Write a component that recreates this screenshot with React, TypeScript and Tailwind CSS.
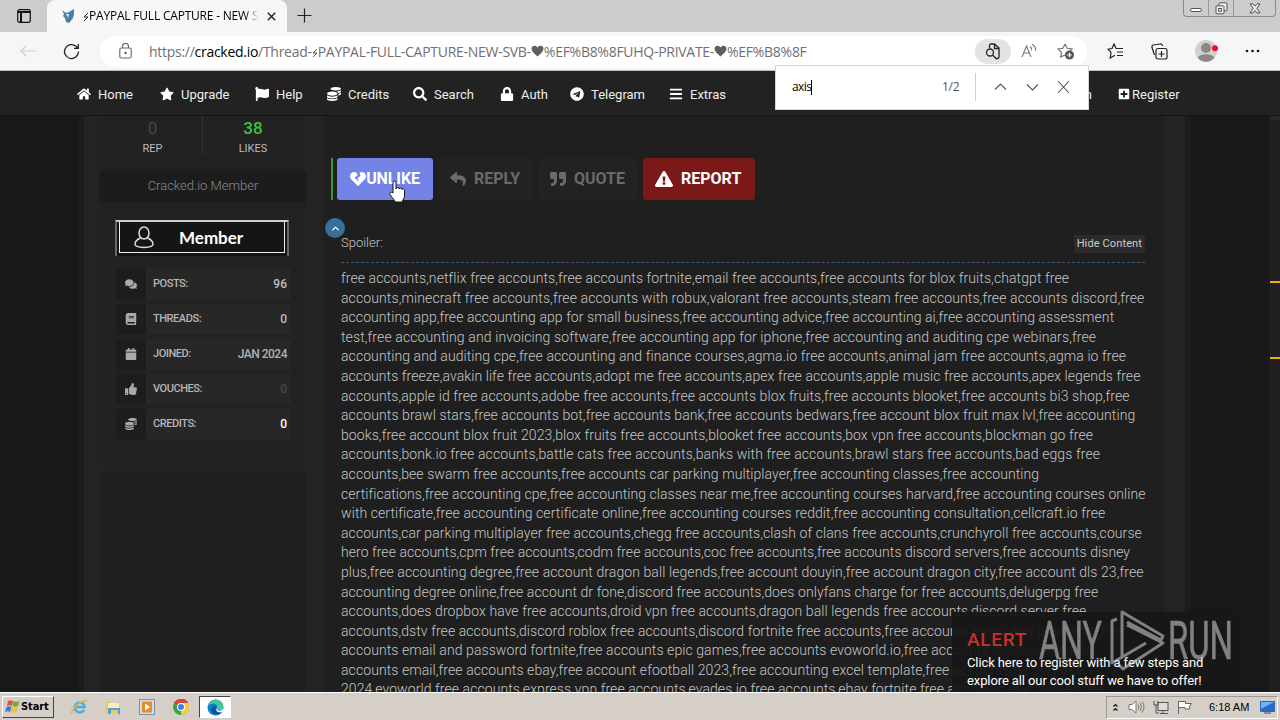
import React from 'react';
import { FaHome, FaStar, FaFlag, FaCoins, FaSearch, FaLock, FaTelegram, FaBars, FaPlusSquare, FaComments, FaBook, FaCalendar, FaThumbsUp, FaReply, FaQuoteRight, FaExclamationTriangle, FaHeartBroken } from 'react-icons/fa';
import { ChevronUp } from 'lucide-react';

const navItems = [
  { label: 'Home', Icon: FaHome, width: 'w-[83px]', text: 'w-[34px]' },
  { label: 'Upgrade', Icon: FaStar, width: 'w-[95px]', text: 'w-[48px]' },
  { label: 'Help', Icon: FaFlag, width: 'w-[72px]', text: 'w-[27px]' },
  { label: 'Credits', Icon: FaCoins, width: 'w-[86px]', text: 'w-[40px]' },
  { label: 'Search', Icon: FaSearch, width: 'w-[87px]', text: 'w-[40px]' },
  { label: 'Auth', Icon: FaLock, width: 'w-[70px]', text: 'w-[27px]' },
  { label: 'Telegram', Icon: FaTelegram, width: 'w-[99px]', text: 'w-[54px]' },
  { label: 'Extras', Icon: FaBars, width: 'w-[90px]', text: 'w-[35px]' },
];

const stats = [
  { label: 'POSTS:', value: '96', Icon: FaComments, color: 'text-[#bdbdbd]' },
  { label: 'THREADS:', value: '0', Icon: FaBook, color: 'text-[#bdbdbd]' },
  { label: 'JOINED:', value: 'JAN 2024', Icon: FaCalendar, color: 'text-[#b0b0b0] tracking-[-0.5px]' },
  { label: 'VOUCHES:', value: '0', Icon: FaThumbsUp, color: 'text-[#4a4a4a]' },
  { label: 'CREDITS:', value: '0', Icon: FaCoins, color: 'text-white' },
];

const lines = [
  { tracking: 'tracking-[0.09px]', text: 'free accounts,netflix free accounts,free accounts fortnite,email free accounts,free accounts for blox fruits,chatgpt free' },
  { tracking: 'tracking-[0.11px]', text: 'accounts,minecraft free accounts,free accounts with robux,valorant free accounts,steam free accounts,free accounts discord,free' },
  { tracking: 'tracking-[0.07px]', text: 'accounting app,free accounting app for small business,free accounting advice,free accounting ai,free accounting assessment' },
  { tracking: 'tracking-[0.115px]', text: 'test,free accounting and invoicing software,free accounting app for iphone,free accounting and auditing cpe webinars,free' },
  { tracking: 'tracking-[0.08px]', text: 'accounting and auditing cpe,free accounting and finance courses,agma.io free accounts,animal jam free accounts,agma io free' },
  { tracking: 'tracking-[0.065px]', text: 'accounts freeze,avakin life free accounts,adopt me free accounts,apex free accounts,apple music free accounts,apex legends free' },
  { tracking: 'tracking-[0.09px]', text: 'accounts,apple id free accounts,adobe free accounts,free accounts blox fruits,free accounts blooket,free accounts bi3 shop,free' },
  { tracking: 'tracking-[0.1px]', text: 'accounts brawl stars,free accounts bot,free accounts bank,free accounts bedwars,free account blox fruit max lvl,free accounting' },
  { tracking: 'tracking-[0.09px]', text: 'books,free account blox fruit 2023,blox fruits free accounts,blooket free accounts,box vpn free accounts,blockman go free' },
  { tracking: 'tracking-[0.11px]', text: 'accounts,bonk.io free accounts,battle cats free accounts,banks with free accounts,brawl stars free accounts,bad eggs free' },
  { tracking: 'tracking-[0.08px]', text: 'accounts,bee swarm free accounts,free accounts car parking multiplayer,free accounting classes,free accounting' },
  { tracking: 'tracking-[0.065px]', text: 'certifications,free accounting cpe,free accounting classes near me,free accounting courses harvard,free accounting courses online' },
  { tracking: 'tracking-[0.085px]', text: 'with certificate,free accounting certificate online,free accounting courses reddit,free accounting consultation,cellcraft.io free' },
  { tracking: 'tracking-[0.08px]', text: 'accounts,car parking multiplayer free accounts,chegg free accounts,clash of clans free accounts,crunchyroll free accounts,course' },
  { tracking: 'tracking-[0.05px]', text: 'hero free accounts,cpm free accounts,codm free accounts,coc free accounts,free accounts discord servers,free accounts disney' },
  { tracking: 'tracking-[0.085px]', text: 'plus,free accounting degree,free account dragon ball legends,free account douyin,free account dragon city,free account dls 23,free' },
  { tracking: 'tracking-[0.075px]', text: 'accounting degree online,free account dr fone,discord free accounts,does onlyfans charge for free accounts,delugerpg free' },
  { tracking: 'tracking-[0.085px]', text: 'accounts,does dropbox have free accounts,droid vpn free accounts,dragon ball legends free accounts,discord server free' },
  { tracking: 'tracking-[0.085px]', text: 'accounts,dstv free accounts,discord roblox free accounts,discord fortnite free accounts,free accounts email and password,free' },
  { tracking: 'tracking-[0.085px]', text: 'accounts email and password fortnite,free accounts epic games,free accounts evoworld.io,free accounts express vpn,free' },
  { tracking: 'tracking-[0.085px]', text: 'accounts email,free accounts ebay,free account efootball 2023,free accounting excel template,free accounts ea play,free' },
  { tracking: 'tracking-[0.085px]', text: '2024,evoworld free accounts,express vpn free accounts,evades.io free accounts,ebay fortnite free accounts,epic games free' },
];

const BrowserTabs = () => (
  <div className="flex h-8 items-end bg-[#cccccc] relative">
    <div className="flex h-8 w-[47px] items-center justify-center">
      <svg width="14" height="14" viewBox="0 0 14 14" fill="none" stroke="#111" strokeWidth="1.2">
        <rect x="0.7" y="0.7" width="12.6" height="12.6" rx="2" />
        <path d="M1 3h12M4 3v10" strokeWidth="2" />
      </svg>
    </div>
    <div className="flex h-8 w-[240px] items-center rounded-t-lg bg-[#f7f7f7] pl-[15px]">
      <svg width="13" height="14" viewBox="0 0 13 14">
        <path d="M0 1l4 3 3-1 5-3v5l-1 4-4 5-3-1-1-4-2-2 1-2z" fill="#4a7fa5" />
        <path d="M4 5l3 0-1 4z" fill="#dce9f2" />
      </svg>
      <span className="ml-[8px] w-[176px] shrink-0 overflow-hidden whitespace-nowrap bg-gradient-to-r from-black from-92% to-transparent bg-clip-text text-[12px] tracking-[-0.2px] text-transparent">
        <svg className="inline" width="6" height="10" viewBox="0 0 6 10"><path d="M5 1L1 5h4L1 9" fill="none" stroke="#222" /></svg>PAYPAL FULL CAPTURE - NEW S
      </span>
      <svg className="ml-[8px]" width="9" height="9" viewBox="0 0 9 9" stroke="#222" strokeWidth="1.4"><path d="M.8.8l7.4 7.4M8.2.8L.8 8.2" /></svg>
    </div>
    <svg className="mb-[9px] ml-[10px]" width="15" height="15" viewBox="0 0 15 15" stroke="#222" strokeWidth="1.2"><path d="M7.5 0.5v14M.5 7.5h14" /></svg>
    {/* window buttons */}
    <div className="absolute right-1 top-0 flex h-[17px] w-[93px] rounded-b border border-t-0 border-[#8b8b8b]">
      <div className="flex w-[25px] items-center justify-center border-r border-[#999]">
        <div className="mt-1 h-[4px] w-[12px] rounded-sm border border-[#555] bg-white" />
      </div>
      <div className="flex w-[25px] items-center justify-center border-r border-[#999]">
        <svg width="13" height="13" viewBox="0 0 13 13" fill="#eee" stroke="#555"><rect x="4" y=".8" width="8" height="8" rx="1" /><rect x="1" y="3.8" width="8" height="8" rx="1" /><rect x="3.6" y="6.5" width="2.8" height="2.8" /></svg>
      </div>
      <div className="flex flex-1 items-center justify-center">
        <svg width="12" height="11" viewBox="0 0 12 11" fill="#eee" stroke="#555"><path d="M1 .8h3l2 2.4L8 .8h3L7.8 5.4 11 10H8L6 7.4 4 10H1l3.2-4.6z" /></svg>
      </div>
    </div>
  </div>
);

const Heart = () => (
  <svg className="inline -mt-[3px]" width="13" height="12" viewBox="0 0 13 12"><path d="M6.5 11.5C3 8.500.5 6.500.5 3.600.5 1 4.500-.5 6.500 2.500 8.500-.5 12.500 1 12.500 3.600 12.500 6.500 10 8.500 6.500 11.500z" fill="#5f5f5f" /></svg>
);

const Toolbar = () => (
  <div className="flex h-[39px] items-center border-b border-[#bdbdbd] bg-[#f6f6f6]">
    <svg className="ml-5" width="16" height="12" viewBox="0 0 16 12" fill="none" stroke="#cfcfcf" strokeWidth="1.2"><path d="M6 1L1 6l5 5M1 6h15" /></svg>
    <svg className="ml-[27px]" width="17" height="17" viewBox="0 0 17 17" fill="none" stroke="#222" strokeWidth="1.3"><path d="M15.500 8.500A7 7 0 1 1 13 3.200l2 2M15.300 1v4.300H11" /></svg>
    <div className="ml-5 flex h-[31px] w-[987px] items-center rounded-full bg-white pl-[19px] text-[14px] text-[#707070]">
      <svg width="13" height="16" viewBox="0 0 13 16" fill="none" stroke="#666" strokeWidth="1.1"><rect x=".8" y="5" width="11.400" height="10" rx="1.500" /><path d="M3.500 5V3.500a3 3 0 0 1 6 0V5" /><circle cx="6.500" cy="10" r=".7" fill="#666" /></svg>
      <span className="ml-[17px] w-[659px] shrink-0 whitespace-nowrap tracking-[-0.28px]">
        https://<span className="text-black">cracked.io</span>/Thread-<svg className="inline" width="6" height="10" viewBox="0 0 6 10"><path d="M5 1L1 5h4L1 9" fill="none" stroke="#555" /></svg>PAYPAL-FULL-CAPTURE-NEW-SVB-<Heart />%EF%B8%8FUHQ-PRIVATE-<Heart />%EF%B8%8F
      </span>
      <div className="ml-[167px] flex h-[25px] w-[36px] items-center justify-center rounded-full bg-[#e3e3e3]">
        <svg width="16" height="17" viewBox="0 0 16 17" fill="none" stroke="#222" strokeWidth="1.300"><path d="M4.500 5V2.500c0-1 .5-1.500 1.500-1.500h3.500L14 5v9c0 1-.5 1.500-1.500 1.500H11M9.500 1v4.500H14" /><circle cx="5" cy="9.500" r="3.500" /><path d="M7.500 12l4 4" /></svg>
      </div>
      <svg className="ml-[10px]" width="17" height="16" viewBox="0 0 17 16" fill="none" stroke="#777" strokeWidth="1.100"><path d="M1 14L5.500 3 10 14M2.700 10h5.600M9 3.500c1.300.8 1.800 2.200 1.700 4M11 1.200c2.500 1.200 3.900 3.500 3.600 6.500" /></svg>
      <svg className="ml-[19px]" width="18" height="17" viewBox="0 0 18 17" fill="none" stroke="#777" strokeWidth="1.200"><path d="M8 1l2.100 4.300 4.900.7-3.500 3.400M8 1L5.900 5.300 1 6l3.600 3.500L3.700 14 8 12" /><circle cx="12.500" cy="12" r="4.500" fill="#555" stroke="none" /><path d="M12.500 9.700v4.600M10.200 12h4.600" stroke="#fff" /></svg>
    </div>
    <svg className="ml-[20px]" width="17" height="16" viewBox="0 0 17 16" fill="none" stroke="#222" strokeWidth="1.200"><path d="M9 5.500L7 1 5 5.500l-4 .6 3 3.400L3.200 15 8 12.300M9 5.500h7M10 9h6M10 12.500h6" /></svg>
    <svg className="ml-[27px]" width="17" height="17" viewBox="0 0 17 17" fill="none" stroke="#222" strokeWidth="1.200"><rect x="5" y="5.500" width="11" height="10.500" rx="2" /><path d="M10.500 8v6M7.500 11h6M3.500 12L1 4.500C.7 3 1 2.300 2.200 2L9 1c1.500-.2 2.300.5 2.500 2" /></svg>
    <svg className="ml-[26px]" width="25" height="24" viewBox="0 0 25 24"><circle cx="12" cy="12" r="11" fill="#d0d0d0" /><circle cx="12" cy="9" r="5" fill="#8b8884" /><path d="M4 19c1-5 15-5 16 0-4 5-12 5-16 0z" fill="#8b8884" /><circle cx="21" cy="9.300" r="3" fill="#e81123" /></svg>
    <svg className="ml-[26px]" width="15" height="4" viewBox="0 0 15 4" fill="#111"><circle cx="2" cy="2" r="1.300" /><circle cx="7.500" cy="2" r="1.300" /><circle cx="13" cy="2" r="1.300" /></svg>
  </div>
);

const FindBar = () => (
  <div className="absolute left-[775px] top-[65px] flex h-[45px] w-[314px] items-center border border-[#d5d5d5] bg-white pb-px pl-4 text-[12px] text-black">
    <span className="tracking-[-0.6px]">axis</span>
    <span className="h-[15px] w-px bg-black" />
    <span className="ml-auto w-[33px] tracking-[-0.3px] text-[#555]">1/2</span>
    <span className="h-7 w-px bg-[#d0d0d0]" />
    <svg className="ml-[18px] mr-[19px]" width="75" height="14" viewBox="0 0 75 14" fill="none" stroke="#555" strokeWidth="1.100"><path d="M1 9.500L6.500 4 12 9.500M33 4.500l5.500 5.500L44 4.500M64 1l11 12M75 1L64 13" /></svg>
  </div>
);

const UserPanel = () => (
  <div className="flex w-[210px] flex-col border-x border-[#262626] bg-[#222222]">
    <div className="flex h-[55px] text-center">
      <div className="mb-4 w-[104px] border-r border-[#333] pl-1">
        <div className="text-[17px] leading-6 text-[#484848]">0</div>
        <div className="mt-px text-[11px] leading-4 text-[#bbb]">REP</div>
      </div>
      <div className="flex-1 pr-1">
        <div className="text-[17px] font-medium leading-6 text-[#3fc142]">38</div>
        <div className="mt-px text-[11px] leading-4 text-[#bbb]">LIKES</div>
      </div>
    </div>
    <div className="flex h-[31px] items-center justify-center bg-[#1c1c1c] pb-[2px] text-[13px] font-light text-[#8a8a8a]">Cracked.io Member</div>
    <div className="mx-[16px] mt-[18px] flex h-[36px] w-[174px] border-2 border-b-0 border-[#cfcfcf] border-x-[#666] bg-[#151515] px-[2px] pb-[3px]">
      <div className="flex flex-1 items-center border-b border-l border-r border-[#eee] pl-[14px]">
        <svg width="20" height="23" viewBox="0 0 20 23" fill="none" stroke="#ddd" strokeWidth="1.500"><ellipse cx="10" cy="7" rx="5" ry="6" /><path d="M6.500 12C3 13.500 1 15 1 18c0 4.500 18 4.500 18 0 0-3-2-4.500-5.500-6" /></svg>
        <span className="ml-[25px] pt-px font-['Lato'] text-[17px] font-bold text-white">Member</span>
      </div>
    </div>
    <div className="ml-[17px] mt-[13px] flex w-[175px] flex-col gap-[5px]">
      {stats.map(({ label, value, Icon, color }) => (
        <div key={label} className="flex h-[30px] items-center bg-[#272727] text-[11px] font-medium text-[#b5b5b5]">
          <div className="flex h-full w-[30px] items-center justify-center bg-[#1d1d1d]"><Icon size={12} color="#aaa" /></div>
          <span className="ml-[7px] tracking-[-0.45px]">{label}</span>
          <span className={`ml-auto mr-[4px] text-[12px] ${color}`}>{value}</span>
        </div>
      ))}
    </div>
    <div className="mt-[32px] flex-1 border-t border-[#262626] bg-[#202020]" />
  </div>
);

const PostBody = () => (
  <div className="ml-[14px] w-[844px] overflow-hidden border-x border-[#252525] bg-[#1f1f1f] pt-[42px]">
    <div className="ml-[8px] flex h-[42px] text-[16px] font-bold text-[#6a6a6a]">
      <div className="mr-[4px] w-[2px] bg-[#329a36]" />
      <button className="flex w-[96px] items-center justify-center rounded-[3px] bg-[#7384e6] text-white"><FaHeartBroken size={16} /><span className="tracking-[-0.1px]">UNLIKE</span></button>
      <button className="ml-[5px] flex w-[95px] items-center rounded-[3px] bg-[#222] pl-[12px]"><FaReply size={16} /><span className="ml-[8px]">REPLY</span></button>
      <button className="ml-[5px] flex w-[100px] items-center rounded-[3px] bg-[#222] pl-[12px]"><FaQuoteRight size={16} /><span className="ml-[8px]">QUOTE</span></button>
      <button className="ml-[5px] flex w-[112px] items-center rounded-[3px] bg-[#7b1919] pl-[12px] text-white"><FaExclamationTriangle size={18} /><span className="ml-[8px]">REPORT</span></button>
    </div>
    <div className="ml-[18px] mr-5 flex h-[63px] items-end justify-between border-b border-dashed border-[#3d5b78] pb-[9px] text-[13px] text-[#b5b5b5]">
      <span className="font-light leading-[20px] text-[#c8c8c8]">Spoiler:</span>
      <span className="bg-[#2b2b2b] px-[3px] text-[11px] leading-[18px] tracking-[0.12px] text-[#ccc]">Hide Content</span>
    </div>
    <div className="ml-[18px] mt-[6px] text-[14px] font-light leading-[19.6px] text-[#c6c6c6]">
      {lines.map(({ text, tracking }) => (
        <div key={text} className={`w-max whitespace-nowrap ${tracking}`}>{text}</div>
      ))}
    </div>
  </div>
);

const AlertBox = () => (
  <div className="absolute left-[952px] top-[612px] h-[80px] w-[285px] bg-[#171717]/95 pl-[15px] pt-[16px] text-white">
    <div className="text-[19px] font-medium leading-6 tracking-[0.7px] text-[#c9302c]">ALERT</div>
    <div className="mt-[2px] w-max text-[13px] leading-[18px] tracking-[-0.1px]">Click here to register with a few steps and<br />explore all our cool stuff we have to offer!</div>
  </div>
);

const Watermark = () => (
  <svg className="absolute left-[1036px] top-[608px]" width="200" height="66" viewBox="0 0 200 66" fill="none" opacity="0.55">
    <g fill="#d8d8d8" fontFamily="Roboto" fontSize="53" stroke="#d8d8d8" strokeWidth="0.6">
      <text x="3" y="51" textLength="63" lengthAdjust="spacingAndGlyphs">ANY</text>
      <text x="132" y="51" textLength="65" lengthAdjust="spacingAndGlyphs">RUN</text>
    </g>
    <path d="M81 11l-5 2v42l34-20M86 50V4l41 24-2 4-34-18M91 17l36 18-40 26-4-4" stroke="#d8d8d8" strokeWidth="3" strokeLinejoin="round" />
  </svg>
);

const Taskbar = () => (
  <div className="relative flex h-7 items-center border-t border-white bg-[#d6cfc7] pt-px font-['Liberation_Sans']">
    <div className="ml-[2px] flex h-[22px] w-[52px] items-center border border-b-[#444] border-l-white border-r-[#444] border-t-white pl-[2px]">
      <svg width="15" height="14" viewBox="0 0 15 14"><path d="M3 1c2-1 3-1 5 0L7 6C5 5 4 5 2 6z" fill="#e6532e" /><path d="M8.500 1c2 1 4 1 6 0L13 6c-2 1-4 1-5.500 0z" fill="#6fae3c" /><path d="M1.500 7C3 6 5 6 6.500 7L5 12c-2-1-3-1-5 0z" fill="#3a7edb" /><path d="M7 7c2 1 4 1 6 0l-1.500 5c-2 1-4 1-6 0z" fill="#f5bf2c" /></svg>
      <span className="ml-px pt-px font-['DejaVu_Sans_Condensed'] text-[11px] font-bold tracking-[-0.1px] text-black">Start</span>
    </div>
    <svg className="ml-[17px]" width="17" height="17" viewBox="0 0 17 17" fill="none"><path d="M13 11a5 5 0 1 1 .7-3H5" stroke="#45aee8" strokeWidth="2.500" /><path d="M1 15C-1 12 10 0 16 2" stroke="#e5b640" strokeWidth="1.500" /></svg>
    <svg className="ml-[17px]" width="17" height="16" viewBox="0 0 17 16"><path d="M1 2h5l1 2h8v10H1z" fill="#e8c868" /><path d="M3 4h11v5H3z" fill="#f8edb8" /><path d="M3 15V9h12v6h-2v-4H6v4z" fill="#4ea3d4" /></svg>
    <svg className="ml-[17px]" width="16" height="16" viewBox="0 0 16 16"><rect x=".5" y=".5" width="15" height="15" fill="#c9dff0" stroke="#7895ac" /><rect x="3" y="2.500" width="10" height="11" fill="#ef8b22" /><path d="M6 4.500v7l5-3.500z" fill="#fff" /></svg>
    <svg className="ml-[18px]" width="16" height="16" viewBox="0 0 16 16"><circle cx="8" cy="8" r="8" fill="#37a34a" /><path d="M8 8L1 4c4-6 12-5 14 0z" fill="#dc4437" /><path d="M8 8h8c0 4-3 8-8 8z" fill="#f7cb3c" /><path d="M8 4h7.500c1 3 0 6-1.500 8h-4z" fill="#f7cb3c" /><path d="M1 4c4-6 12-5 14 0z" fill="#dc4437" /><circle cx="8" cy="8" r="4" fill="#fff" /><circle cx="8" cy="8" r="3" fill="#427fe8" /></svg>
    <div className="ml-[10px] flex h-[22px] w-[32px] items-center justify-center border border-b-white border-l-[#444] border-r-white border-t-[#444] bg-white">
      <svg width="17" height="17" viewBox="0 0 17 17"><circle cx="8.500" cy="8.500" r="8" fill="#1380ce" /><path d="M1 7C2-1 16-2 16.500 8c0 4-6 4-6.500 1C11 4 5 3 1 7z" fill="#43c7a0" /><path d="M9 8c-2 4 2 6 6 4-2 5-10 5-11-1 0-3 4-5 6-3z" fill="#0d549d" /><path d="M10 9c0 4 5 3 7 0v3l-2 1c-4 1-7-1-5-4z" fill="#fff" /></svg>
    </div>
    <div className="ml-auto mr-[2px] flex h-[23px] w-[172px] items-center border border-b-white border-l-[#999] border-r-white border-t-[#999] pl-[6px] text-black">
      <svg width="5" height="9" viewBox="0 0 5 9" fill="none" stroke="#111" strokeWidth="1.200"><path d="M.5 3.500l2-2 2 2M.5 7.500l2-2 2 2" /></svg>
      <svg className="ml-[10px]" width="17" height="14" viewBox="0 0 17 14" fill="#fff" stroke="#777"><path d="M1 4.500h3L8 1v12L4 9.500H1z" /><path d="M10 4.500q2 2.500 0 5M12 3q3 4 0 8M14 1.500q4 5.500 0 11" fill="none" /></svg>
      <svg className="ml-[8px]" width="16" height="15" viewBox="0 0 16 15" fill="#ddd" stroke="#555"><rect x="5" y="2.500" width="10" height="8" /><path d="M7 13.500h8M10 11v2M1 1v4h4V1M3 5v8h3" fill="none" /></svg>
      <svg className="ml-[8px]" width="16" height="15" viewBox="0 0 16 15" fill="#fff" stroke="#666"><path d="M1.500 14V1.500h7v2h6L12 7l1 2H8V7.500H1.500" /></svg>
      <span className="ml-[16px] w-[42px] whitespace-nowrap text-[11px]">6:18 AM</span>
      <svg className="ml-[9px]" width="15" height="13" viewBox="0 0 15 13"><rect width="15" height="11" rx="1" fill="#2869c8" /><path d="M1 1h13L1 8z" fill="#72b1f0" /><path d="M4 12h7" stroke="#445" /></svg>
    </div>
  </div>
);

const App: React.FC = () => {
  return (
    <div className="relative h-[720px] w-[1280px] overflow-hidden bg-[#181818] font-['Open_Sans',sans-serif]">
      <BrowserTabs />
      <Toolbar />
      <div className="flex h-[45px] items-center border-b border-[#151515] bg-[#222] pl-[77px] pt-[3px] font-['Roboto',sans-serif] text-[13px] text-[#eee]">
        {navItems.map(({ label, Icon, width, text }) => (
          <div key={label} className={`flex shrink-0 items-center gap-[7px] ${width}`}>
            <Icon size={14} className="mb-[2px] shrink-0 text-white" />
            <span className={text}>{label}</span>
          </div>
        ))}
        <div className="ml-[300px] w-[59px] pr-[26px] text-right">Login</div>
        <FaPlusSquare size={12} className="mb-[2px] shrink-0 text-white" />
        <span className="ml-[2px]">Register</span>
      </div>
      <div className="flex h-[576px] overflow-hidden font-['Roboto',sans-serif]">
        <div className="ml-[78px] flex w-[1113px] border-x-6 border-[#1c1c1c] bg-[#232323] pl-[14px]">
          <UserPanel />
          <PostBody />
        </div>
        {/* scrollbar with find-in-page markers */}
        <div className="ml-auto w-[10px] bg-[#202020]">
          <div className="h-[4px] bg-[#292929]" />
          <div className="mt-[161px] h-[2px] bg-[#f0b000]" />
          <div className="mt-[74px] h-[2px] bg-[#f0b000]" />
        </div>
      </div>
      <Taskbar />
      <FindBar />
      <div className="absolute left-[325px] top-[218px] flex h-5 w-5 items-center justify-center rounded-full bg-[#376f98] text-white"><ChevronUp size={11} strokeWidth={3} /></div>
      <div className="font-['Roboto',sans-serif]"><AlertBox /></div>
      <Watermark />
      {/* hand cursor */}
      <svg className="absolute left-[388px] top-[180px]" width="18" height="24" viewBox="0 0 18 24" fill="#fff" stroke="#111" strokeWidth="1"><path d="M5 13V3c0-2.500 3-2.500 3 0v6c0-2 3-2 3 0 0-1.500 3-1.500 3 .5 0-1.500 2.500-1 2.500 1V16c0 3-2 3-2 6H7c0-2-3-4-5-7.500-1-2 1.500-3 3-1.500z" /></svg>
    </div>
  );
};

export default App;
